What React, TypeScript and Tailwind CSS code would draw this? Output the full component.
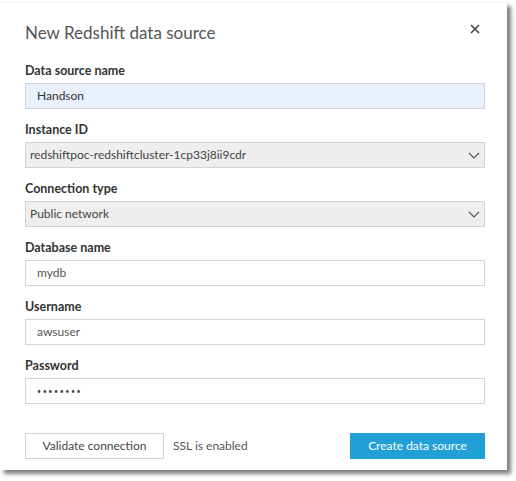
import React from 'react';

const font = { fontFamily: 'Lato, "Noto Sans", Arial, sans-serif' };

const Chevron: React.FC = () => (
  <svg width="12" height="7" viewBox="0 0 12 7" className="text-[#555]">
    <path d="M1 1l5 5 5-5" fill="none" stroke="currentColor" strokeWidth="1.2" />
  </svg>
);

const Label: React.FC<{ text: string }> = ({ text }) => (
  <div className="mb-1 h-4 text-[12.5px] font-bold leading-4 text-[#333]">{text}</div>
);

const TextField: React.FC<{ label: string; value: string; blue?: boolean; password?: boolean }> = ({
  label,
  value,
  blue,
  password,
}) => (
  <div className="mb-[13px]">
    <Label text={label} />
    <div
      className={`flex h-[26px] items-center border pl-[11px] text-[12px] text-[#333] ${
        blue ? 'border-[#c9d3df] bg-[#e8f0fe]' : 'border-[#d5d5d5] bg-white text-[#555]'
      }`}
    >
      {password ? <span className="text-[7px] tracking-[1.6px] text-[#444]">{value}</span> : value}
    </div>
  </div>
);

const SelectField: React.FC<{ label: string; value: string }> = ({ label, value }) => (
  <div className="mb-[13px]">
    <Label text={label} />
    <div className="flex h-[26px] items-center justify-between border border-[#d2d2d2] bg-[#eeeeee] pl-[4px] pr-[4px] text-[12px] text-[#444]">
      <span>{value}</span>
      <Chevron />
    </div>
  </div>
);

const App: React.FC = () => {
  return (
    <div className="h-[481px] w-[516px] bg-white" style={font}>
      <div className="mt-[2px] h-[468px] w-[507px] border-t border-[#f0f0f0] bg-white shadow-[4px_4px_4px_rgba(0,0,0,0.5)]">
        <div className="pl-[25px] pr-[22px] pt-[18px]">
          <div className="mb-[18px] flex items-center justify-between">
            <h1 className="text-[17px] leading-6 text-[#555]">New Redshift data source</h1>
            <svg width="10" height="10" viewBox="0 0 10 10" className="mr-[5px] -mt-2 text-[#444]">
              <path d="M1 1l8 8M9 1l-8 8" stroke="currentColor" strokeWidth="1.6" />
            </svg>
          </div>
          <TextField label="Data source name" value="Handson" blue />
          <SelectField label="Instance ID" value="redshiftpoc-redshiftcluster-1cp33j8ii9cdr" />
          <SelectField label="Connection type" value="Public network" />
          <TextField label="Database name" value="mydb" />
          <TextField label="Username" value="awsuser" />
          <TextField label="Password" value="••••••••" password />
          <div className="mt-[29px] flex items-center">
            <button className="h-[26px] w-[139px] border border-[#d0d0d0] bg-white text-[12px] text-[#444]">
              Validate connection
            </button>
            <span className="ml-[9px] text-[12px] text-[#555]">SSL is enabled</span>
            <button className="ml-auto h-[26px] w-[135px] bg-[#21a0d8] text-[12px] text-white">
              Create data source
            </button>
          </div>
        </div>
      </div>
    </div>
  );
};

export default App;
